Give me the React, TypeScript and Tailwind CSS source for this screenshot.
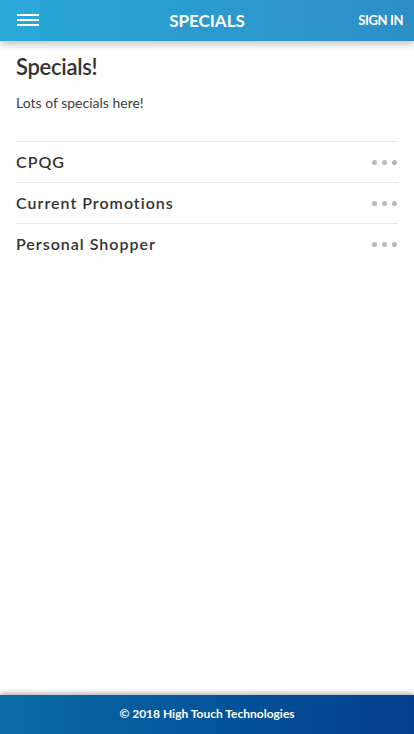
import React from 'react';

const items = ['CPQG', 'Current Promotions', 'Personal Shopper'];

const Dots = () => (
    <div className="flex items-center gap-[5px] pr-px">
        <span className="w-[5px] h-[5px] rounded-full bg-[#b8b8b8]" />
        <span className="w-[5px] h-[5px] rounded-full bg-[#b8b8b8]" />
        <span className="w-[5px] h-[5px] rounded-full bg-[#b8b8b8]" />
    </div>
);

const App: React.FC = () => {
    return (
        <div className="h-[734px] w-full flex flex-col bg-white overflow-hidden" style={{ fontFamily: 'Lato, "Open Sans", sans-serif' }}>
            {/* Header */}
            <header className="relative z-10 h-[41px] shrink-0 flex items-center justify-between pl-[17px] pr-[11px] bg-gradient-to-r from-[#29a8d8] to-[#2d8ec6] shadow-[0_3px_8px_rgba(0,0,0,0.25)]">
                <div className="w-[22px] flex flex-col gap-[3px] -mt-px">
                    <span className="h-[2px] bg-white" />
                    <span className="h-[2px] bg-white" />
                    <span className="h-[2px] bg-white" />
                </div>
                <h1 className="absolute left-1/2 -translate-x-1/2 top-[11px] text-white font-bold text-[17px] leading-[20px]">SPECIALS</h1>
                <span className="text-white font-bold text-[13px] tracking-[-0.4px] leading-none -mt-px">SIGN IN</span>
            </header>

            {/* Content */}
            <main className="flex-1 px-4 pt-[12px]">
                <h2 className="text-[22px] leading-[28px] text-[#333] font-semibold tracking-[-0.3px]">Specials!</h2>
                <p className="mt-[12px] text-[14px] leading-[20px] text-[#3c3c3c]">Lots of specials here!</p>
                <div className="mt-[28px]">
                    {items.map((item) => (
                        <div key={item} className="h-[41px] flex items-center justify-between border-t border-[#e6e6e6]">
                            <span className="text-[16px] font-semibold tracking-[1px] text-[#333] -mt-px">{item}</span>
                            <Dots />
                        </div>
                    ))}
                </div>
            </main>

            {/* Footer */}
            <footer className="h-[39px] shrink-0 flex items-center justify-center bg-gradient-to-r from-[#0b6ba7] to-[#033e8c] shadow-[0_-2px_5px_rgba(0,0,0,0.3)]">
                <span className="text-white font-bold text-[12px] -mt-px">© 2018 High Touch Technologies</span>
            </footer>
        </div>
    );
};

export default App;
